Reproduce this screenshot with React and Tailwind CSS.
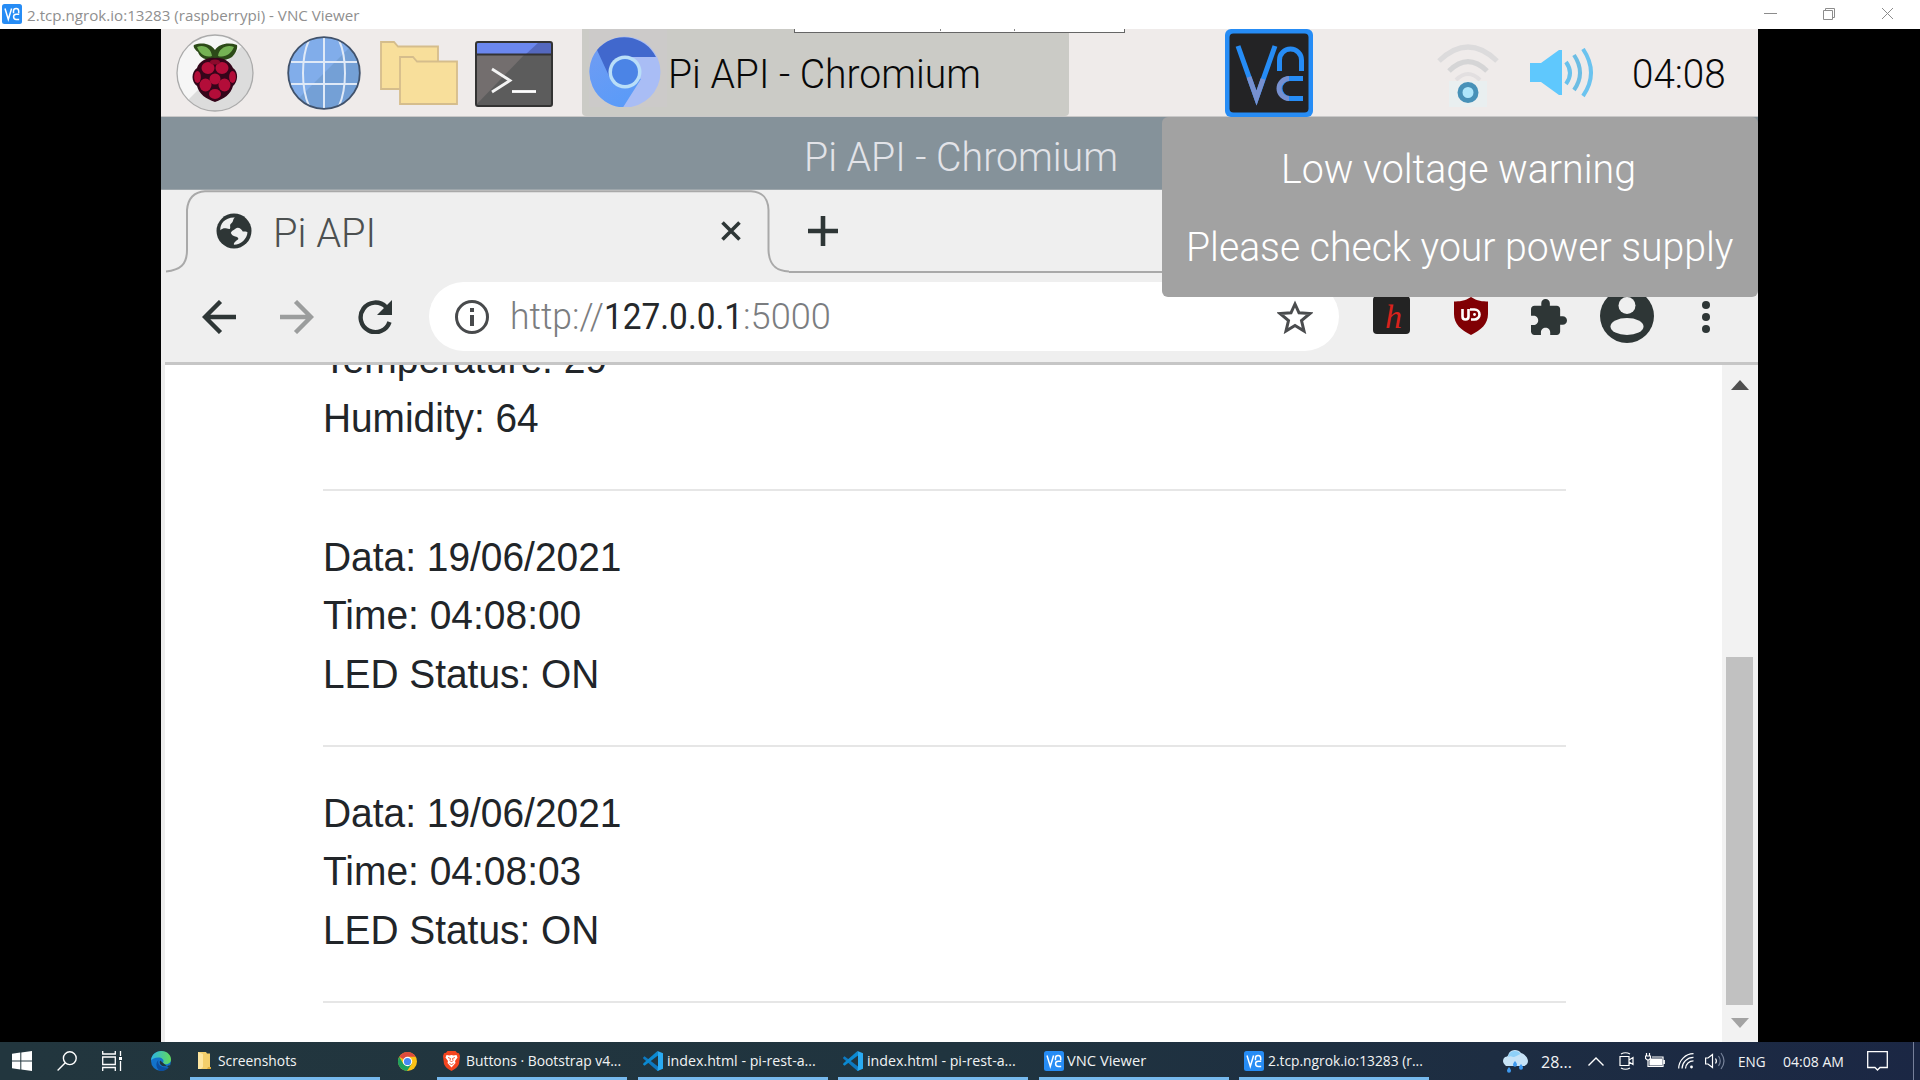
import React, { useLayoutEffect, useRef, useState } from "react";

// Single line of text stretched or condensed to the width of its box.
function Fit({ className = "", children }) {
  const box = useRef(null);
  const inner = useRef(null);
  const [scale, setScale] = useState(1);
  useLayoutEffect(() => {
    const w = inner.current.offsetWidth;
    if (w) setScale(box.current.clientWidth / w);
  }, []);
  return (
    <div ref={box} className={`shrink-0 whitespace-nowrap ${className}`}>
      <span ref={inner} className="inline-block origin-left" style={{ transform: `scaleX(${scale})` }}>
        {children}
      </span>
    </div>
  );
}

function VncBadge({ className = "" }) {
  return (
    <svg viewBox="0 0 20 20" className={`h-5 w-5 shrink-0 ${className}`} fill="none">
      <rect width="20" height="20" rx="2.5" fill="#268cf5" />
      <path d="M3 4.5 L6.3 15.5 L9.6 4.5" stroke="#fff" strokeWidth="1.5" />
      <path d="M11.5 9.2V7a2.6 2.6 0 0 1 5.2 0v2.2" stroke="#fff" strokeWidth="1.5" />
      <path d="M17.2 10.2h-3a2.6 2.6 0 0 0 0 5.2h3" stroke="#fff" strokeWidth="1.5" />
    </svg>
  );
}

function RaspberryIcon() {
  return (
    <svg viewBox="0 0 78 78" className="ml-[15px] mt-[5px] h-[78px] w-[78px] shrink-0">
      <circle cx="39" cy="39" r="38" fill="#dcdcdc" />
      <path d="M12 66A38 38 0 0 1 66 12Z" fill="#f6f6f6" />
      <circle cx="39" cy="39" r="38" fill="none" stroke="#ababab" strokeWidth="1.3" />
      <path d="M38 25C30 27 24 24 22 18C18 15 17 12 18 11C27 8 35 10 39 16C43 10 52 8 61 11C62 15 59 20 56 23C50 27 43 27 38 25Z" fill="#2c4a18" />
      <path d="M36 22C29 24 24 20 21 13C28 10 35 14 36 22ZM42 22C49 24 55 20 58 13C51 10 43 14 42 22Z" fill="#75b254" />
      <path d="M39 24C46 23 54 27 57 34C63 38 62 48 57 52C55 60 48 65 39 68C30 65 23 60 21 52C15 48 15 38 21 34C23 27 32 23 39 24Z" fill="#35051a" />
      <g fill="#b30d39">
        <ellipse cx="32" cy="34" rx="6.5" ry="6" />
        <ellipse cx="46" cy="34" rx="6.5" ry="6" />
        <ellipse cx="21.5" cy="43" rx="3.4" ry="6" />
        <ellipse cx="56.5" cy="43" rx="3.4" ry="6" />
        <ellipse cx="39" cy="45" rx="5.5" ry="5.5" />
        <ellipse cx="29.5" cy="51" rx="6" ry="6.5" />
        <ellipse cx="48.5" cy="51" rx="6" ry="6.5" />
        <ellipse cx="39" cy="60" rx="6" ry="5" />
      </g>
      <ellipse cx="39" cy="28" rx="5" ry="2.6" fill="#8c0a2c" />
    </svg>
  );
}

function GlobeIcon() {
  return (
    <svg viewBox="0 0 74 74" className="ml-[33px] mt-[7px] h-[74px] w-[74px] shrink-0">
      <circle cx="37" cy="37" r="36" fill="#74a0d6" />
      <path d="M11.5 62.5A36 36 0 0 1 62.500 11.5Z" fill="#81adea" />
      <g fill="none" stroke="#dfe9f7" strokeWidth="2">
        <path d="M37 1v72M4 26h66M4 48h66M22 4C14 22 14 52 22 70M52 4C60 22 60 52 52 70" />
      </g>
      <circle cx="37" cy="37" r="35.800" fill="none" stroke="#41526b" strokeWidth="1.8" />
    </svg>
  );
}

function FoldersIcon() {
  return (
    <svg viewBox="0 0 78 64" className="ml-[19px] mt-[12px] h-[64px] w-[78px] shrink-0" fill="#f8df9b" stroke="#d5bd8c" strokeWidth="1.8">
      <path d="M1 1H14L18 5.500H58V48H1Z" />
      <path d="M20 16H33L37 20.500H77V63H20Z" />
    </svg>
  );
}

function TerminalIcon() {
  return (
    <svg viewBox="0 0 78 66" className="ml-[17px] mt-[12px] h-[66px] w-[78px] shrink-0">
      <rect x="1" y="1" width="76" height="64" rx="2" fill="#5c5c5c" />
      <path d="M1 64V13H50Z" fill="#736e6e" />
      <rect x="1" y="1" width="76" height="12" fill="#6b87ee" />
      <path d="M51 13L64 1H77V13Z" fill="#5468be" />
      <rect x="1" y="1" width="76" height="64" rx="2" fill="none" stroke="#333" strokeWidth="2" />
      <path d="M1 13.500H77" stroke="#333" strokeWidth="2" />
      <path d="M17 28L35 39.500L17 51" fill="none" stroke="#f4f4f4" strokeWidth="2.800" />
      <path d="M37 50.500H61" stroke="#fff" strokeWidth="2.800" />
    </svg>
  );
}

function ChromiumIcon() {
  return (
    <svg viewBox="0 0 78 78" className="ml-[7px] h-[78px] w-[78px] shrink-0">
      <defs>
        <linearGradient id="chL" x1="0" y1="0" x2="0.5" y2="1">
          <stop offset="0" stopColor="#6f9cf3" />
          <stop offset="1" stopColor="#5b9bf8" />
        </linearGradient>
      </defs>
      <rect width="78" height="78" fill="#cccac9" />
      <circle cx="36" cy="43" r="35.500" fill="#a9bdf5" />
      <path d="M36 43L8 21A35.500 35.500 0 0 0 34 78.400L52 50Z" fill="url(#chL)" />
      <path d="M8 21A35.500 35.500 0 0 1 67 28H38L20 47Z" fill="#4168cd" />
      <circle cx="36" cy="43" r="16.500" fill="#b9def8" />
      <circle cx="36" cy="43" r="13" fill="#4b84e6" />
    </svg>
  );
}

function VncTrayIcon() {
  return (
    <svg viewBox="0 0 88 88" className="ml-[156px] h-[88px] w-[88px] shrink-0" fill="none">
      <rect width="88" height="88" rx="6" fill="#268cf5" />
      <rect x="4.500" y="4.500" width="79" height="79" rx="4" fill="#232325" />
      <g stroke="#268cf5" strokeWidth="5">
        <path d="M13 17L31.500 69L50 17" />
        <path d="M54.500 42V31A11 11 0 0 1 76.500 31V42" />
        <path d="M78 49.500H65A10 10 0 0 0 65 69.500H78" />
      </g>
      <path d="M24 48L31.500 69L38 50" stroke="#7790cf" strokeWidth="5" />
      <path d="M64 49.500A10 10 0 0 0 64 69.500" stroke="#7790cf" strokeWidth="5" />
    </svg>
  );
}

function WifiTrayIcon() {
  return (
    <svg viewBox="0 0 62 78" className="ml-[124px] h-[78px] w-[62px] shrink-0" fill="none">
      <path d="M2 32Q31 4 60 32" stroke="#dcdbdc" strokeWidth="5" />
      <path d="M12 42Q31 23 50 42" stroke="#d5d5d6" strokeWidth="5" />
      <path d="M19 51Q31 39 43 51" stroke="#e2dfe0" strokeWidth="4" />
      <rect x="12" y="52" width="38" height="26" fill="#e9eff0" />
      <circle cx="31" cy="63.500" r="8" fill="#aee6fb" stroke="#4791b8" strokeWidth="5" />
    </svg>
  );
}

function VolumeTrayIcon() {
  return (
    <svg viewBox="0 0 70 50" className="ml-[31px] mt-[19px] h-[50px] w-[70px] shrink-0" fill="none">
      <path d="M0 15H11L29 2H32V47H29L11 34H0Z" fill="#5fc8fd" />
      <path d="M36 14Q44 25 36 36" stroke="#69c1ec" strokeWidth="4" />
      <path d="M44 7Q56 25 44 42" stroke="#6cbde4" strokeWidth="4" />
      <path d="M53 1Q69 25 53 48" stroke="#6bc3ef" strokeWidth="4" />
    </svg>
  );
}

function PiPanel() {
  return (
    <div className="relative flex h-[88px] items-start border-b border-[#c9c8c8] bg-[#efebea]">
      <RaspberryIcon />
      <GlobeIcon />
      <FoldersIcon />
      <TerminalIcon />
      <div className="ml-[29px] flex h-[87px] w-[487px] shrink-0 items-start rounded-b bg-[#cbcbc6]">
        <ChromiumIcon />
        <Fit className="ml-[1px] mt-[21px] w-[313px] font-['Roboto'] text-[41px] font-light leading-[48px] text-[#080808]">Pi API - Chromium</Fit>
      </div>
      <VncTrayIcon />
      <WifiTrayIcon />
      <VolumeTrayIcon />
      <Fit className="ml-[32px] mt-[21px] w-[94px] font-['Roboto'] text-[41px] font-light leading-[48px] text-[#080808]">04:08</Fit>
      {/* Folded edge of the viewer's own toolbar */}
      <div className="absolute left-[633px] top-0 flex h-[4px] w-[331px] border-x border-b border-[#666] bg-white">
        <div className="ml-[145px] h-[2px] w-px bg-[#888]" />
        <div className="ml-[73px] h-[2px] w-px bg-[#888]" />
      </div>
    </div>
  );
}

function Notification() {
  return (
    <div className="absolute right-0 top-[88px] h-[180px] w-[596px] rounded-md bg-[#a2a2a2] font-['Roboto'] text-[41px] font-light text-white">
      <Fit className="ml-[119px] mt-[28px] w-[355px] leading-[48px]">Low voltage warning</Fit>
      <Fit className="ml-[24px] mt-[30px] w-[547px] leading-[48px]">Please check your power supply</Fit>
    </div>
  );
}

function TabStrip() {
  return (
    <div className="flex h-[83px] items-start">
      <div className="relative flex h-[83px] w-[624px] shrink-0 items-start">
        <svg viewBox="0 0 624 83" className="absolute left-0 top-0 h-[83px] w-[624px]" fill="none" stroke="#a9a9a9" strokeWidth="2">
          <path d="M1 81.500C15 80 22 75 22 60V20C23 8 29 2 40 1.200H586C598 2 603 8 603.500 20V60C604 75 611 81 624 81.500" />
        </svg>
        <svg viewBox="0 0 24 24" className="relative ml-[48px] mt-[20px] h-[42px] w-[42px]">
          <circle cx="12" cy="12" r="10" fill="#2e3636" />
          <path d="M12.500 4.300C11 5.500 12 6.500 10.500 7.500C9 8.500 10.500 10 9.500 10.800C8 11 6.500 9.500 4.200 11.500C3.800 8 7 4 12.500 4.300ZM13 10.500C14.500 9.500 16.500 11 17 12.300C18 12.500 19 12 19.700 12.700C19.500 16.500 16 19.800 12 19.800C11.500 18.500 13.500 17.500 14.500 16.500C14.500 14.500 11 15.500 10.500 13.500C9.500 12.800 11.500 11.500 13 10.500Z" fill="#eeefef" />
        </svg>
        <Fit className="relative ml-[18px] mt-[19px] w-[103px] font-['Roboto'] text-[41px] font-light leading-[48px] text-[#4c5050]">Pi API</Fit>
        <svg viewBox="0 0 20 20" className="relative ml-[345px] mt-[31px] h-[20px] w-[20px]" stroke="#2e3636" strokeWidth="3.600">
          <path d="M1.500 1.500L18.500 18.500M18.500 1.500L1.500 18.500" />
        </svg>
      </div>
      <div className="flex h-[83px] grow items-start border-b-2 border-[#a9a9a9]">
        <svg viewBox="0 0 30 30" className="ml-[19px] mt-[26px] h-[30px] w-[30px]" stroke="#2e3636" strokeWidth="4.600">
          <path d="M15 0V30M0 15H30" />
        </svg>
      </div>
    </div>
  );
}

function Toolbar() {
  return (
    <div className="flex h-[92px] items-start border-b-[3px] border-[#c6c6c6]">
      <svg viewBox="0 0 34 34" className="ml-[37px] mt-[27px] h-[34px] w-[34px] shrink-0" fill="none" stroke="#2e3636" strokeWidth="4.400">
        <path d="M18.500 1.500L3 17L18.500 32.500M3 17H34" />
      </svg>
      <svg viewBox="0 0 34 34" className="ml-[44px] mt-[27px] h-[34px] w-[34px] shrink-0" fill="none" stroke="#9b9d9d" strokeWidth="4.400">
        <path d="M15.500 1.500L31 17L15.500 32.500M31 17H0" />
      </svg>
      <svg viewBox="0 0 34 34" className="ml-[44px] mt-[27px] h-[34px] w-[34px] shrink-0" fill="none">
        <path d="M31.500 22A14.800 14.800 0 1 1 28 7" stroke="#2e3636" strokeWidth="4.400" />
        <path d="M34 0V15H19Z" fill="#2e3636" />
      </svg>
      <div className="ml-[37px] mt-[9px] flex h-[69px] w-[910px] shrink-0 items-start rounded-full bg-white font-['Roboto'] text-[37px] font-light leading-[48px] text-[#7b7d80]">
        <svg viewBox="0 0 34 34" className="ml-[26px] mt-[18px] h-[34px] w-[34px]" fill="none" stroke="#484a4c">
          <circle cx="17" cy="17" r="15.500" strokeWidth="3" />
          <path d="M17 8v4M17 15v11" strokeWidth="4" />
        </svg>
        <Fit className="ml-[21px] mt-[11px] w-[94px]">http://</Fit>
        <Fit className="mt-[11px] w-[139px] font-normal text-[#25282b]">127.0.0.1</Fit>
        <Fit className="mt-[11px] w-[88px]">:5000</Fit>
        <svg viewBox="0 0 36 34" className="ml-[446px] mt-[18px] h-[34px] w-[36px]" fill="none" stroke="#4a4c4e" strokeWidth="3">
          <path d="M18 4L22 12.800L33 13.500L24.500 20.600L27 31L18 25.500L9 31L11.500 20.600L3 13.500L14 12.800Z" />
        </svg>
      </div>
      <div className="ml-[34px] mt-[23px] flex h-[38px] w-[37px] items-center justify-center rounded-sm bg-[#232323] pb-px pl-1 pt-1 font-['Liberation_Serif'] text-[34px] italic leading-none text-[#d8221c]">h</div>
      <svg viewBox="0 0 36 40" className="ml-[43px] mt-[23px] h-[40px] w-[36px] shrink-0" fill="none">
        <path d="M18 1C24 5 30 5.500 35 5.500V18C35 28 28 34 18 39C8 34 1 28 1 18V5.500C6 5.500 12 5 18 1Z" fill="#800004" />
        <path d="M9.500 13V20.500C9.500 24.500 15.500 24.500 15.500 20.500V13" stroke="#fff" strokeWidth="2.600" />
        <path d="M17 13.500H21.500A5 5 0 0 1 21.500 23.500H18" stroke="#fff" strokeWidth="2.600" />
        <circle cx="21.500" cy="18.500" r="1.400" fill="#fff" />
      </svg>
      <svg viewBox="2 1 21 21" className="ml-[42px] mt-[26px] h-[36px] w-[36px] shrink-0" fill="#2e3636">
        <path d="M20.500 11H19V7c0-1.100-.9-2-2-2h-4V3.500C13 2.120 11.880 1 10.500 1S8 2.120 8 3.500V5H4c-1.100 0-1.990.9-1.990 2v3.800H3.500c1.490 0 2.700 1.210 2.700 2.700s-1.210 2.700-2.700 2.700H2V20c0 1.100.9 2 2 2h3.800v-1.500c0-1.490 1.210-2.700 2.700-2.700 1.490 0 2.700 1.210 2.700 2.700V22H17c1.100 0 2-.9 2-2v-4h1.500c1.380 0 2.500-1.120 2.500-2.500S21.880 11 20.500 11z" />
      </svg>
      <svg viewBox="0 0 54 54" className="ml-[33px] mt-[16px] h-[54px] w-[54px] shrink-0">
        <circle cx="27" cy="27" r="27" fill="#2e3636" />
        <circle cx="27" cy="16.500" r="8.500" fill="#efefef" />
        <ellipse cx="27" cy="37.500" rx="16.500" ry="8.500" fill="#efefef" />
      </svg>
      <svg viewBox="0 0 8 34" className="ml-[48px] mt-[28px] h-[34px] w-[8px] shrink-0" fill="#2e3636">
        <circle cx="4" cy="4" r="4" />
        <circle cx="4" cy="16" r="4" />
        <circle cx="4" cy="28" r="4" />
      </svg>
    </div>
  );
}

const entries = [
  [["w-[284px]", "Temperature: 29"], ["w-[216px]", "Humidity: 64"]],
  [["w-[298px]", "Data: 19/06/2021"], ["w-[258px]", "Time: 04:08:00"], ["w-[276px]", "LED Status: ON"]],
  [["w-[298px]", "Data: 19/06/2021"], ["w-[258px]", "Time: 04:08:03"], ["w-[276px]", "LED Status: ON"]],
];

function Page() {
  return (
    <div className="flex grow overflow-hidden border-l-[4px] border-[#ededed] bg-white">
      <div className="-mt-[35px] ml-[158px] w-[1243px] font-['Liberation_Sans'] text-[41.5px] leading-[58.5px] text-[#212529]">
        {entries.map((lines, i) => (
          <div key={i}>
            {lines.map(([w, text]) => (
              <Fit key={text} className={w}>{text}</Fit>
            ))}
            <div className="mb-[36.5px] mt-[42px] h-[2px] bg-[#e6e6e6]" />
          </div>
        ))}
      </div>
      <div className="ml-auto flex w-[36px] flex-col items-center bg-[#f2f2f2]">
        <svg viewBox="0 0 18 10" className="mt-[15px] h-[10px] w-[18px]" fill="#505050"><path d="M0 10L9 0L18 10Z" /></svg>
        <div className="mr-px mt-[267px] h-[348px] w-[27px] bg-[#c1c1c1]" />
        <svg viewBox="0 0 18 10" className="mt-[13px] h-[10px] w-[18px]" fill="#a3a3a3"><path d="M0 0L9 10L18 0Z" /></svg>
      </div>
    </div>
  );
}

function RemoteDesktop() {
  return (
    <div className="relative flex h-[1013px] w-[1597px] flex-col overflow-hidden bg-[#efefef]">
      <PiPanel />
      <div className="flex h-[73px] shrink-0 items-start border-b border-[#9da6ab] bg-[#85929a]">
        <Fit className="ml-[643px] mt-[16px] w-[314px] font-['Roboto'] text-[41px] font-light leading-[48px] text-[#e2e3e8]">Pi API - Chromium</Fit>
      </div>
      <div className="shrink-0 pl-[4px]"><TabStrip /></div>
      <div className="shrink-0 pl-[4px]"><Toolbar /></div>
      <Page />
      <Notification />
    </div>
  );
}

function EdgeIcon() {
  return (
    <svg viewBox="0 0 20 20" className="ml-[29px] h-5 w-5 shrink-0">
      <defs>
        <linearGradient id="eg1" x1="0" y1="0" x2="1" y2="0"><stop offset="0" stopColor="#2cb3e6" /><stop offset="1" stopColor="#63dc5a" /></linearGradient>
      </defs>
      <circle cx="10" cy="10" r="10" fill="#1273cc" />
      <path d="M0 9.500C.5 3.500 5 0 10.300 0C16.500 0 20 4.300 20 8.200C20 11.500 17.500 13.200 14.700 13.200C12 13.200 11.500 12.200 12.200 11.300C13.200 10 12 7 8.500 6.500C4.500 6 1 8 0 9.500Z" fill="url(#eg1)" />
      <path d="M7.500 9C6 13 9.500 17.500 17.800 16.200A10 10 0 0 1 9 20C5 18 4 12 7.500 9Z" fill="#0c4ea0" />
      <path d="M9.200 9.500C7.500 12 10 16 15 15.200C17 14.900 18.500 14 19 14C18.500 15.500 18 16 17.500 16.600" fill="#21363e" />
    </svg>
  );
}

function FolderIcon() {
  return (
    <svg viewBox="0 0 13 18" className="ml-[8px] h-[18px] w-[13px] shrink-0">
      <path d="M0 0H8L9 1.500H12V17H0Z" fill="#f3cf6b" />
      <path d="M0 0L5 2V15L3 17H0Z" fill="#fde6a0" />
      <path d="M10 15H13V17H9Z" fill="#e0ae3c" />
    </svg>
  );
}

function ChromeIcon() {
  return (
    <svg viewBox="0 0 20 20" className="ml-[18px] h-[19px] w-[19px] shrink-0">
      <circle cx="10" cy="10" r="10" fill="#fbc116" />
      <path d="M10 10L1.340 5A10 10 0 0 1 18.660 5H10Z" fill="#dd4b3e" />
      <path d="M1.340 5A10 10 0 0 0 9.500 20L14.300 12.500L5.700 12.500Z" fill="#1da160" />
      <circle cx="10" cy="10" r="4.900" fill="#fff" />
      <circle cx="10" cy="10" r="3.800" fill="#4688f4" />
    </svg>
  );
}

function BraveIcon() {
  return (
    <svg viewBox="0 0 17 20" className="ml-[6px] h-[20px] w-[17px] shrink-0">
      <path d="M4.500 0H12.500L14 1.800L16 2.300L17 5L16 13C15 16 12 18 8.500 20C5 18 2 16 1 13L0 5L1 2.300L3 1.800Z" fill="#f4451f" />
      <path d="M3.500 4L6.500 4.500L8.500 4L10.500 4.500L13.500 4L14.500 6.500L12 10L12.500 12L8.500 16.500L4.500 12L5 10L2.500 6.500Z" fill="#fff" />
      <path d="M5 6.500L7.500 7.500L7 9.500L8.500 11L10 9.500L9.500 7.500L12 6.500M6.500 12.500L8.500 13.500L10.500 12.500" fill="none" stroke="#f4451f" strokeWidth=".9" />
    </svg>
  );
}

function CodeIcon() {
  return (
    <svg viewBox="0 0 20 20" className="ml-[5px] h-5 w-5 shrink-0">
      <path d="M15 4.500V15.500L1.500 5.300L0 6.700L.2 7.600L14.500 20H15.500V14" fill="#0d79c1" />
      <path d="M14.500 0L.2 12.400L0 13.500L1.500 14.700L15 4.500Z" fill="#0b89d1" />
      <path d="M14.500 0L20 2.300V17.700L14.500 20L15 14.500V5.500Z" fill="#2aaaf2" />
    </svg>
  );
}

function TaskButton({ icon, textClass, className, children }) {
  return (
    <div className={`flex h-[38px] shrink-0 items-center border-b-[3px] border-[#76b9ed] pt-[2px] ${className}`}>
      {icon}
      <Fit className={`pt-px ${textClass}`}>{children}</Fit>
    </div>
  );
}

function Taskbar() {
  return (
    <div className="flex h-[38px] items-center bg-linear-to-r from-[#22363e] via-[#20343f] to-[#1b2744] font-['Open_Sans'] text-[14.5px] leading-5 text-[#f1f3f4]">
      <svg viewBox="0 0 20 20" className="ml-[12px] h-5 w-5 shrink-0" fill="#fff">
        <path d="M0 2.800L8.300 1.500V9.500H0ZM9.300 1.400L20 0V9.500H9.300ZM0 10.500H8.300V18.500L0 17.200ZM9.300 10.500H20V20L9.300 18.600Z" />
      </svg>
      <svg viewBox="0 0 20 20" className="ml-[25px] h-5 w-5 shrink-0" fill="none" stroke="#fff" strokeWidth="1.400">
        <circle cx="12.800" cy="7.200" r="6.400" />
        <path d="M8.300 11.800L.6 19.400" />
      </svg>
      <svg viewBox="0 0 20 20" className="ml-[25px] h-5 w-5 shrink-0" fill="none" stroke="#fff" strokeWidth="1.300">
        <path d="M.7 0V3H13.300V0M.7 20V16.500H13.300V20M.7 6H13.300V13.500H.7ZM18.500 0V5M18.500 10V20" />
        <path d="M17 7.500H20" strokeWidth="3" />
      </svg>
      <EdgeIcon />
      <TaskButton className="ml-[19px] w-[190px]" textClass="ml-[7px] w-[79px]" icon={<FolderIcon />}>Screenshots</TaskButton>
      <ChromeIcon />
      <TaskButton className="ml-[20px] w-[190px]" textClass="ml-[6px] w-[155px]" icon={<BraveIcon />}>Buttons · Bootstrap v4...</TaskButton>
      <TaskButton className="ml-[11px] w-[190px]" textClass="ml-[4px] w-[149px]" icon={<CodeIcon />}>index.html - pi-rest-a...</TaskButton>
      <TaskButton className="ml-[10px] w-[190px]" textClass="ml-[4px] w-[149px]" icon={<CodeIcon />}>index.html - pi-rest-a...</TaskButton>
      <TaskButton className="ml-[11px] w-[190px]" textClass="ml-[3px] w-[79px]" icon={<VncBadge className="ml-[5px]" />}>VNC Viewer</TaskButton>
      <TaskButton className="ml-[10px] w-[190px]" textClass="ml-[4px] w-[155px]" icon={<VncBadge className="ml-[5px]" />}>2.tcp.ngrok.io:13283 (r...</TaskButton>
      <svg viewBox="0 0 27 25" className="ml-[72px] h-[25px] w-[27px] shrink-0">
        <path d="M4 16A5 5 0 0 1 4 8C6 8 7 7 8 4A7 6 0 0 1 20 4C24 5 27 9 27 12C27 15 25 17 22 17H5Z" fill="#c7e3f7" />
        <path d="M8 5A6.500 5.500 0 0 1 19.500 5C16 6 15 8 12 8C10 7 9 7 7 8Z" fill="#8ed0f8" />
        <path d="M14 12c1.600 2 2 3 2 3.800a2 2 0 0 1-4 0C12 15 12.500 14 14 12ZM8 18c1.600 2 2 3 2 3.800a2 2 0 0 1-4 0C6 21 6.500 20 8 18ZM20 15c1.600 2 2 3 2 3.800a2 2 0 0 1-4 0C18 18 18.500 17 20 15Z" fill="#3f9af0" />
      </svg>
      <Fit className="ml-[13px] w-[31px] pt-[2px] text-[16.5px]">28...</Fit>
      <svg viewBox="0 0 16 9" className="ml-[16px] h-[9px] w-4 shrink-0" fill="none" stroke="#fff" strokeWidth="1.400"><path d="M.5 8.500L8 1L15.500 8.500" /></svg>
      <svg viewBox="0 0 15 18" className="ml-[15px] h-[18px] w-[15px] shrink-0" fill="none" stroke="#fff" strokeWidth="1.200">
        <path d="M2 2Q6.500-.5 11 2M2 16Q6.500 18.500 11 16M1 4.500H10V13.500H1ZM10 8L14 5.500V12.500L10 10" />
      </svg>
      <svg viewBox="0 0 20 16" className="ml-[11px] h-4 w-5 shrink-0" fill="none" stroke="#fff" strokeWidth="1.200">
        <path d="M1.500 0V3M4.500 0V3M.5 3H5.500V5.500L3 7.500L.5 5.500ZM3 7V13.500H18V4H7M19.300 7V11" />
        <path d="M6 6H16.500V12H5V8Z" fill="#fff" />
      </svg>
      <svg viewBox="0 0 16 16" className="ml-[13px] h-4 w-4 shrink-0" fill="none" stroke="#fff" strokeWidth="1.200">
        <path d="M.7 15.500A15 15 0 0 1 15.500 .7M4 15.500A11.500 11.500 0 0 1 15.500 4.300M7.500 15.500A8 8 0 0 1 15.500 7.800" />
        <circle cx="13.500" cy="14" r="1.400" fill="#fff" stroke="none" />
      </svg>
      <svg viewBox="0 0 20 18" className="ml-[11px] h-[18px] w-5 shrink-0" fill="none" stroke="#fff" strokeWidth="1.200">
        <path d="M.6 6H3L7.500 2.500V15.500L3 12H.6ZM10.500 6.500Q12.300 9 10.500 11.500" />
        <path d="M13.500 4Q17 9 13.500 14M16 1Q22 9 16 17" stroke="#77839a" />
      </svg>
      <Fit className="ml-[13px] w-[28px] pt-[2px]">ENG</Fit>
      <Fit className="ml-[17px] w-[61px] pt-[2px]">04:08 AM</Fit>
      <svg viewBox="0 0 21 20" className="ml-[23px] h-5 w-[21px] shrink-0" fill="none" stroke="#fff" strokeWidth="1.300">
        <path d="M.7 .7H20.300V16.500H13L10.500 19L8 16.500H.7Z" />
      </svg>
      <div className="ml-[25px] h-full w-px bg-[#76809a]" />
    </div>
  );
}

export default function App() {
  return (
    <div className="flex h-[1080px] w-[1920px] flex-col overflow-hidden bg-black">
      <div className="flex h-[29px] items-start bg-white">
        <VncBadge className="ml-[2px] mt-[4px]" />
        <Fit className="ml-[5px] mt-[6px] w-[333px] font-['Open_Sans'] text-[14.5px] leading-5 text-[#8f8f8f]">2.tcp.ngrok.io:13283 (raspberrypi) - VNC Viewer</Fit>
        <svg viewBox="0 0 130 13" className="ml-auto mr-[26px] mt-[7px] h-[13px] w-[130px]" fill="none" stroke="#8c8c8c" strokeWidth="1">
          <path d="M0 6.500H13M59.500 3.500H68.500V12.500H59.500ZM61.500 3.500V1.500H70.500V10.500H68.500M118 1L129 12M129 1L118 12" />
        </svg>
      </div>
      <div className="flex justify-center pr-px">
        <RemoteDesktop />
      </div>
      <Taskbar />
    </div>
  );
}
